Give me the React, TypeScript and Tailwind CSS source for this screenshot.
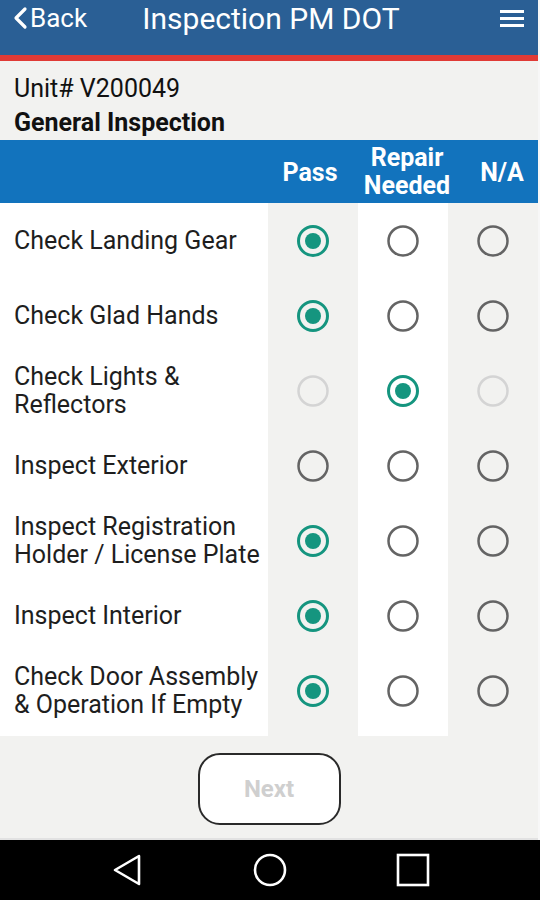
import React from "react";

type State = "pass" | "repair" | "na" | "none";
const rows: { label: string[]; sel: State; disabled?: boolean }[] = [
  { label: ["Check Landing Gear"], sel: "pass" },
  { label: ["Check Glad Hands"], sel: "pass" },
  { label: ["Check Lights &", "Reflectors"], sel: "repair", disabled: true },
  { label: ["Inspect Exterior"], sel: "none" },
  { label: ["Inspect Registration", "Holder / License Plate"], sel: "pass" },
  { label: ["Inspect Interior"], sel: "pass" },
  { label: ["Check Door Assembly", "& Operation If Empty"], sel: "pass" },
];

function Radio({ on, faded }: { on: boolean; faded: boolean }) {
  if (on) {
    return (
      <svg width="34" height="34" viewBox="0 0 34 34">
        <circle cx="17" cy="17" r="14.5" fill="none" stroke="#15957f" strokeWidth="3" />
        <circle cx="17" cy="17" r="8" fill="#15957f" />
      </svg>
    );
  }
  return (
    <svg width="34" height="34" viewBox="0 0 34 34">
      <circle cx="17" cy="17" r="14.5" fill="none" stroke={faded ? "#d4d4d4" : "#646464"} strokeWidth="2.5" />
    </svg>
  );
}

export default function App() {
  return (
    <div className="w-[540px] h-[900px] bg-[#f7f7f7] flex flex-col overflow-hidden" style={{ fontFamily: "Roboto, 'Noto Sans', sans-serif" }}>
      <div className="w-[538px] flex flex-col bg-[#f2f2f0] flex-1">
        {/* Header */}
        <div className="h-[55px] bg-[#2a5f95] relative">
          <div className="absolute left-[12px] top-[2px] flex items-center text-white text-[26px] leading-[32px]">
            <svg width="16" height="24" viewBox="0 0 16 24" className="mr-[2px]">
              <path d="M13 3 L4 12 L13 21" fill="none" stroke="white" strokeWidth="3.2" strokeLinecap="round" strokeLinejoin="round" />
            </svg>
            <span>Back</span>
          </div>
          <div className="w-full text-center text-white text-[30px] leading-[36px] pt-[1px] pl-[4px]">Inspection PM DOT</div>
          <div className="absolute right-[14px] top-[10px] flex flex-col gap-[4px]">
            <div className="w-[24px] h-[3px] bg-white" />
            <div className="w-[24px] h-[3px] bg-white" />
            <div className="w-[24px] h-[3px] bg-white" />
          </div>
        </div>
        <div className="h-[6px] bg-[#e03a35]" />
        {/* Unit info */}
        <div className="px-[14px] pt-[13px] h-[79px] text-[#111]">
          <div className="text-[25px] leading-[30px] whitespace-nowrap">Unit# V200049</div>
          <div className="text-[25px] leading-[30px] font-bold mt-[4px] whitespace-nowrap">General Inspection</div>
        </div>
        {/* Table header */}
        <div className="h-[63px] bg-[#1273bd] flex text-white font-bold text-[25px] whitespace-nowrap">
          <div className="w-[268px]" />
          <div className="w-[90px] flex items-center justify-center pr-[6px] pt-[2px]">Pass</div>
          <div className="w-[90px] flex flex-col items-center justify-center leading-[28px] pl-[8px]">
            <span>Repair</span>
            <span>Needed</span>
          </div>
          <div className="w-[90px] flex items-center justify-center pl-[18px] pt-[2px]">N/A</div>
        </div>
        {/* Rows */}
        <div className="flex flex-col">
          {rows.map((r, i) => {
            const last = i === rows.length - 1;
            return (
              <div key={i} className={last ? "h-[83px] flex" : "h-[75px] flex"}>
                <div className={(last ? "pb-[8px] " : "") + "w-[268px] bg-white flex flex-col justify-center pl-[14px] text-[25px] leading-[28px] text-[#1e1e1e] whitespace-nowrap"}>
                  {r.label.map((l, j) => (
                    <span key={j}>{l}</span>
                  ))}
                </div>
                <div className={(last ? "pb-[8px] " : "") + "w-[90px] bg-[#f2f2f0] flex items-center justify-center"}>
                  <Radio on={r.sel === "pass"} faded={!!r.disabled} />
                </div>
                <div className={(last ? "pb-[8px] " : "") + "w-[90px] bg-white flex items-center justify-center"}>
                  <Radio on={r.sel === "repair"} faded={!!r.disabled} />
                </div>
                <div className={(last ? "pb-[8px] " : "") + "w-[90px] bg-[#f2f2f0] flex items-center justify-center"}>
                  <Radio on={r.sel === "na"} faded={!!r.disabled} />
                </div>
              </div>
            );
          })}
        </div>
        {/* Next */}
        <div className="flex-1 flex justify-center pt-[17px]">
          <div className="w-[143px] h-[72px] rounded-[22px] border-2 border-[#2a2a2a] bg-white flex items-center justify-center text-[24px] font-bold text-[#cfcfcf]">
            Next
          </div>
        </div>
        <div className="h-[2px] bg-[#e2e2e2]" />
      </div>
      {/* Nav bar */}
      <div className="h-[60px] bg-black flex items-center justify-center gap-[103px] w-[540px]">
        <div className="w-[40px] flex justify-center">
          <svg width="32" height="34" viewBox="0 0 32 34">
            <path d="M28 3 L4 17 L28 31 Z" fill="none" stroke="white" strokeWidth="2.6" strokeLinejoin="round" />
          </svg>
        </div>
        <div className="w-[40px] flex justify-center">
          <svg width="34" height="34" viewBox="0 0 34 34">
            <circle cx="17" cy="17" r="15" fill="none" stroke="white" strokeWidth="2.6" />
          </svg>
        </div>
        <div className="w-[40px] flex justify-center">
          <svg width="34" height="34" viewBox="0 0 34 34">
            <rect x="2" y="2" width="30" height="30" fill="none" stroke="white" strokeWidth="2.6" />
          </svg>
        </div>
      </div>
    </div>
  );
}
